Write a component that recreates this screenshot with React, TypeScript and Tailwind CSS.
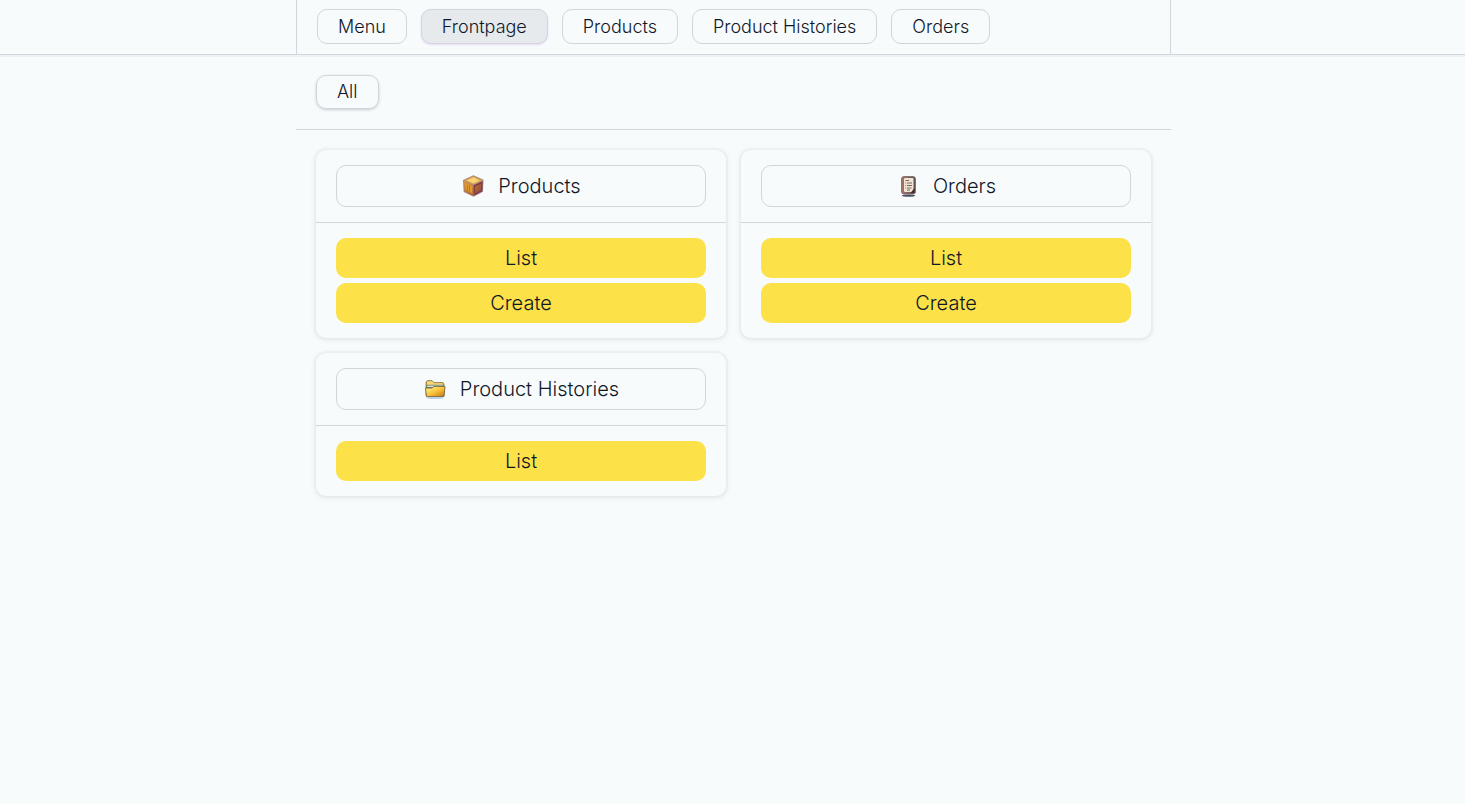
import { ReactNode } from "react";

const navItems = ["Menu", "Frontpage", "Products", "Product Histories", "Orders"];

function BoxIcon() {
  return (
    <svg width="24" height="24" viewBox="0 0 24 24" aria-hidden="true">
      <defs>
        <linearGradient id="box-left" x1="0" y1="0" x2="0" y2="1">
          <stop offset="0" stopColor="#dc9b3c" />
          <stop offset="1" stopColor="#b3662f" />
        </linearGradient>
        <linearGradient id="box-right" x1="0" y1="0" x2="1" y2="1">
          <stop offset="0" stopColor="#c77b30" />
          <stop offset="1" stopColor="#8b4250" />
        </linearGradient>
      </defs>
      <path d="M12.500 1.200 22.500 5.800 22 17.800 12.500 22.700 2.700 18 2 6Z" fill="#a98480" />
      <path d="M12.500 2.200 21.500 6.400 12.500 10.600 3 6.400Z" fill="#dda954" />
      <path d="M12.500 3.500 18.500 6.500 12.500 9.300 6 6.500Z" fill="#f8d673" />
      <path d="M2.900 7.200 12.200 11.200V21.700L3.500 17.300Z" fill="url(#box-left)" />
      <path d="M4.400 9.600 10.800 12.400V19L4.800 16Z" fill="#e6a136" />
      <path d="M12.700 11.200 21.700 7.200 21.200 17.300 12.700 21.700Z" fill="#7e3c46" />
      <path d="M14.200 12.500 20.200 9.700 19.900 16.200 14.200 19.200Z" fill="url(#box-right)" />
      <path d="M6.400 10.800V16.700M8.600 11.700V17.700M16.200 11.900V17.900M18.200 10.900V16.900" stroke="#9c572c" strokeWidth=".7" />
    </svg>
  );
}

function ClipboardIcon() {
  return (
    <svg width="24" height="24" viewBox="0 0 24 24" aria-hidden="true">
      <defs>
        <linearGradient id="board-frame" x1="0" y1="0" x2="1" y2="0">
          <stop offset="0" stopColor="#a97468" />
          <stop offset="1" stopColor="#5c5356" />
        </linearGradient>
      </defs>
      <ellipse cx="12.500" cy="21.600" rx="6.800" ry="1.200" fill="#4d5260" />
      <rect x="5.500" y="2.500" width="14" height="17.500" rx="2.500" fill="url(#board-frame)" stroke="#71676a" strokeWidth=".8" />
      <rect x="8" y="4" width="9.500" height="14" rx="1" fill="#f1e4d3" />
      <path d="M9.500 6.500H13M11 9H16M11 11.500H16M11 14H15.500M11 16H14" stroke="#76665f" strokeWidth="1" />
      <path d="M9.200 9h1M9.200 11.500h1M9.200 14h1" stroke="#bd765e" strokeWidth="1" />
      <path d="M18.500 14v5h-4Z" fill="#45292e" />
    </svg>
  );
}

function FolderIcon() {
  return (
    <svg width="24" height="24" viewBox="0 0 24 24" aria-hidden="true">
      <defs>
        <linearGradient id="folder-front" x1="0" y1="0" x2="1" y2="1">
          <stop offset=".25" stopColor="#ffe169" />
          <stop offset=".55" stopColor="#f8bd37" />
          <stop offset="1" stopColor="#bd7616" />
        </linearGradient>
      </defs>
      <ellipse cx="12" cy="20.800" rx="9" ry="1.300" fill="#b9d2e6" />
      <path d="M3 18.500V5L4.500 3.500H9L11 5.500H20L21 7V18.500Z" fill="#d5a33f" stroke="#8d7c54" strokeWidth=".8" />
      <path d="M4 5 5 4.300h3.800l2 2h9v2H4Z" fill="#f8d777" />
      <path d="M3.400 7.800H20.600V11H3.400Z" fill="#557a80" />
      <path d="M4.200 8.600H20V10H4.200Z" fill="#e4ecd2" />
      <path d="M2.500 11H9l2-1.500h11L21 19.500H3.500Z" fill="url(#folder-front)" stroke="#765c32" strokeWidth=".8" />
    </svg>
  );
}

function Card({ title, icon, actions }: { title: string; icon: ReactNode; actions: string[] }) {
  return (
    <section className="rounded-[10px] shadow-[0_0_0_2px_rgba(17,24,39,0.025),0_1px_5px_2px_rgba(17,24,39,0.05)]">
      <div className="border-b border-gray-300 px-5 py-[15px]">
        <a
          href="#"
          className="flex h-[42px] items-center justify-center gap-[13px] rounded-[10px] border border-gray-300"
        >
          {icon}
          {title}
        </a>
      </div>
      <div className="flex flex-col gap-[5px] px-5 py-[15px]">
        {actions.map((action) => (
          <a
            key={action}
            href="#"
            className="flex h-10 items-center justify-center rounded-[10px] bg-[#fce148]"
          >
            {action}
          </a>
        ))}
      </div>
    </section>
  );
}

export default function App() {
  return (
    <div className="min-h-screen bg-[#f7fbfc] font-['Inter',sans-serif] text-lg font-light text-gray-900">
      <header className="border-b border-gray-300 pl-0.5 shadow-[0_2px_0_rgba(17,24,39,0.04)]">
        <nav className="mx-auto flex max-w-[875px] flex-wrap gap-3.5 border-x border-gray-300 px-5 pt-[9px] pb-2.5">
          {navItems.map((item) =>
            item === "Menu" ? (
              <button key={item} type="button" className="flex h-[35px] items-center rounded-[10px] border border-gray-300 px-5">
                {item}
              </button>
            ) : (
              <a
                key={item}
                href="#"
                className={
                  item === "Frontpage"
                    ? "flex h-[35px] items-center rounded-[10px] border border-gray-300 bg-[#e6eaed] px-5 shadow-[0_1px_2px_rgba(168,85,247,0.2)]"
                    : "flex h-[35px] items-center rounded-[10px] border border-gray-300 px-5"
                }
              >
                {item}
              </a>
            )
          )}
        </nav>
      </header>
      <main className="pl-0.5">
        <div className="mx-auto max-w-[875px]">
          <div className="flex border-b border-gray-300 px-5 pt-5 pb-5">
            <button
              type="button"
              className="flex h-[34px] items-center rounded-[10px] border border-gray-300 px-5 shadow-[0_1px_3px_rgba(17,24,39,0.2)]"
            >
              All
            </button>
          </div>
          <div className="grid grid-cols-1 items-start gap-[15px] p-5 text-xl sm:grid-cols-2">
            <Card title="Products" icon={<BoxIcon />} actions={["List", "Create"]} />
            <Card title="Orders" icon={<ClipboardIcon />} actions={["List", "Create"]} />
            <Card title="Product Histories" icon={<FolderIcon />} actions={["List"]} />
          </div>
        </div>
      </main>
    </div>
  );
}
